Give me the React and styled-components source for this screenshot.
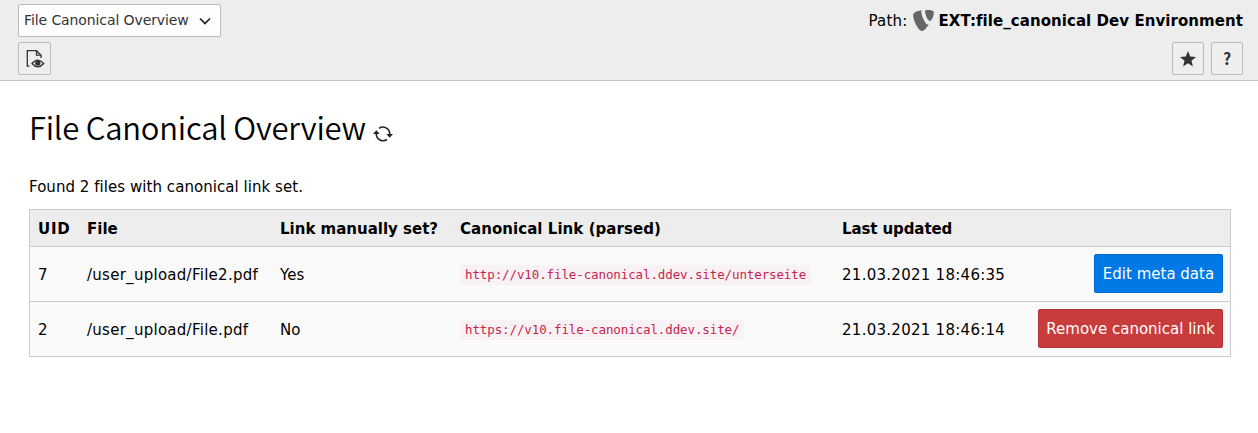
import React from 'react';
import styled, { createGlobalStyle } from 'styled-components';
import { SiTypo3 } from 'react-icons/si';

const GlobalStyle = createGlobalStyle`
  *, *::before, *::after { box-sizing: border-box; }
  body {
    margin: 0;
    background: #fff;
    color: #000;
    font-family: "DejaVu Sans", Verdana, sans-serif;
    font-size: 15px;
    line-height: 22px;
  }
`;

const DocHeader = styled.header`
  height: 81px;
  padding: 4px 15px 0 18px;
  background: #ededed;
  border-bottom: 1px solid #c3c3c3;
`;

const HeaderRow = styled.div`
  display: flex;
  justify-content: space-between;
  align-items: flex-start;
  height: 33px;
  margin-bottom: 5px;
`;

const Label = styled.span`
  letter-spacing: ${(p) => p.$track || 0}px;
  white-space: nowrap;
`;

const Select = styled.button`
  display: flex;
  align-items: center;
  justify-content: space-between;
  width: 203px;
  height: 33px;
  padding: 0 9px 1px 5px;
  border: 1px solid #bbb;
  border-radius: 2px;
  background: #fefefe;
  color: #333;
  font: 14px/30px "DejaVu Sans", Verdana, sans-serif;
`;

const Chevron = styled.svg`
  margin-top: 2px;
`;

const Path = styled.div`
  display: flex;
  align-items: center;
  height: 33px;
`;

const PathTitle = styled.strong`
  letter-spacing: ${(p) => p.$track}px;
  white-space: nowrap;
`;

const PathLogo = styled(SiTypo3)`
  width: 21px;
  height: 21px;
  margin: 0 5px 1px 5px;
  color: #666;
`;

const ButtonGroup = styled.div`
  display: flex;
  gap: 7px;
`;

const IconButton = styled.button`
  display: flex;
  align-items: center;
  justify-content: center;
  width: ${(p) => p.$width || 32}px;
  height: 33px;
  padding: 0;
  border: 1px solid #bbb;
  border-radius: 2px;
  background: #eee;
  color: #333;
`;

const HelpMark = styled.span`
  padding-bottom: 2px;
  font: bold 16px/28px "Noto Sans CJK SC", "Noto Sans", sans-serif;
`;

const Content = styled.main`
  padding: 22px 27px 0 29px;
`;

const Title = styled.h1`
  display: flex;
  align-items: center;
  height: 48px;
  margin: 0 0 25px;
  font: 350 31px/48px "Noto Sans CJK SC", "Noto Sans", sans-serif;
  letter-spacing: ${(p) => p.$track}px;
  white-space: nowrap;
`;

const RefreshIcon = styled.svg`
  margin: 13px 0 0 7px;
`;

const Summary = styled.p`
  margin: 0 0 11px;
  height: 22px;
`;

const Table = styled.table`
  width: 1202px;
  border-collapse: separate;
  border-spacing: 0;
  table-layout: fixed;
  border: 1px solid #ccc;
  border-bottom: 0;
  background: #fafafa;
`;

const HeadCell = styled.th`
  height: 37px;
  padding: 1px 0 0 8px;
  border-bottom: 1px solid #ccc;
  background: #ededed;
  text-align: left;
  white-space: nowrap;
`;

const Cell = styled.td`
  height: 55px;
  padding: ${(p) => (p.$end ? '0 7px 1px 8px' : '1px 0 0 8px')};
  border-bottom: 1px solid #ccc;
  text-align: ${(p) => (p.$end ? 'right' : 'left')};
  white-space: nowrap;
  vertical-align: middle;
`;

const Code = styled.code`
  display: block;
  width: max-content;
  height: 20px;
  padding: 0 5px 0 5px;
  border-radius: 2px;
  background: #f9f2f4;
  color: #c7254e;
  font: 12.5px/20px "DejaVu Sans Mono", monospace;
  letter-spacing: -0.11px;
`;

const ActionButton = styled.button`
  display: block;
  width: ${(p) => p.$width}px;
  height: 39px;
  margin-left: auto;
  padding: 1px 0 0;
  border: 1px solid ${(p) => (p.$danger ? '#b53535' : '#006dd1')};
  border-radius: 2px;
  background: ${(p) => (p.$danger ? '#c83c3c' : '#0078e6')};
  color: #fff;
  font: 15px/36px "DejaVu Sans", Verdana, sans-serif;
  white-space: nowrap;
`;

const columns = [
  { label: 'UID', width: 49, track: 0.8 },
  { label: 'File', width: 193, track: 0 },
  { label: 'Link manually set?', width: 180, track: 0 },
  { label: 'Canonical Link (parsed)', width: 382, track: 0.05 },
  { label: 'Last updated', width: 180, track: -0.1 },
  { label: '', width: 216, track: 0 },
];

const rows = [
  {
    uid: '7', file: '/user_upload/File2.pdf', manual: 'Yes',
    link: 'http://v10.file-canonical.ddev.site/unterseite',
    updated: '21.03.2021 18:46:35',
    action: { label: 'Edit meta data', width: 129 },
  },
  {
    uid: '2', file: '/user_upload/File.pdf', manual: 'No',
    link: 'https://v10.file-canonical.ddev.site/',
    updated: '21.03.2021 18:46:14',
    action: { label: 'Remove canonical link', width: 185, danger: true },
  },
];

export default function App() {
  return (
    <>
      <GlobalStyle />
      <DocHeader>
        <HeaderRow>
          <Select>
            <Label $track={-0.1}>File Canonical Overview</Label>
            <Chevron width="12" height="8" viewBox="0 0 12 8" fill="none" stroke="#222" strokeWidth="1.7">
              <path d="M1 1.500 6 6.500 11 1.500" />
            </Chevron>
          </Select>
          <Path>
            <Label $track={0.2}>Path:</Label>
            <PathLogo />
            <PathTitle $track={0.06}>EXT:file_canonical Dev Environment</PathTitle>
          </Path>
        </HeaderRow>
        <HeaderRow>
          <IconButton $width={33}>
            <svg width="20" height="20" viewBox="0 0 20 20" fill="none" stroke="#333" strokeWidth="1.300">
              <path d="M4.500 17.200H2.300V1.700H11.500L16 6.200V9" />
              <path d="M11.500 1.700V6.200H16" />
              <path d="M7 14.500Q12.800 7.600 18.700 14.500Q12.800 21.200 7 14.500Z" />
              <circle cx="12.800" cy="14" r="2.700" fill="#333" stroke="none" />
            </svg>
          </IconButton>
          <ButtonGroup>
            <IconButton>
              <svg width="16" height="16" viewBox="0 0 16 16" fill="#333">
                <path d="M8 0 10.200 5.500 16 5.900 11.500 9.700 12.900 15.500 8 12.300 3.100 15.500 4.500 9.700 0 5.900 5.800 5.500Z" />
              </svg>
            </IconButton>
            <IconButton><HelpMark>?</HelpMark></IconButton>
          </ButtonGroup>
        </HeaderRow>
      </DocHeader>
      <Content>
        <Title $track={-0.21}>
          File Canonical Overview
          <RefreshIcon width="20" height="16" viewBox="0 0 20 16" fill="none" stroke="#222" strokeWidth="1.600">
            <path d="M6 2.300A6.800 6.800 0 0 1 16.700 8M14 13.500A6.800 6.800 0 0 1 3.300 8" />
            <path d="M13.300 8H20L16.700 11.800ZM0 8H6.700L3.300 4.200Z" fill="#222" stroke="none" />
          </RefreshIcon>
        </Title>
        <Summary><Label $track={0.05}>Found 2 files with canonical link set.</Label></Summary>
        <Table>
          <colgroup>
            {columns.map((c, i) => <col key={i} width={c.width} />)}
          </colgroup>
          <thead>
            <tr>
              {columns.map((c, i) => (
                <HeadCell key={i}><Label $track={c.track}>{c.label}</Label></HeadCell>
              ))}
            </tr>
          </thead>
          <tbody>
            {rows.map((r) => (
              <tr key={r.uid}>
                <Cell>{r.uid}</Cell>
                <Cell><Label $track={0.27}>{r.file}</Label></Cell>
                <Cell><Label $track={0.1}>{r.manual}</Label></Cell>
                <Cell><Code>{r.link}</Code></Cell>
                <Cell><Label $track={0.27}>{r.updated}</Label></Cell>
                <Cell $end>
                  <ActionButton $width={r.action.width} $danger={r.action.danger}>
                    <Label $track={0}>{r.action.label}</Label>
                  </ActionButton>
                </Cell>
              </tr>
            ))}
          </tbody>
        </Table>
      </Content>
    </>
  );
}
